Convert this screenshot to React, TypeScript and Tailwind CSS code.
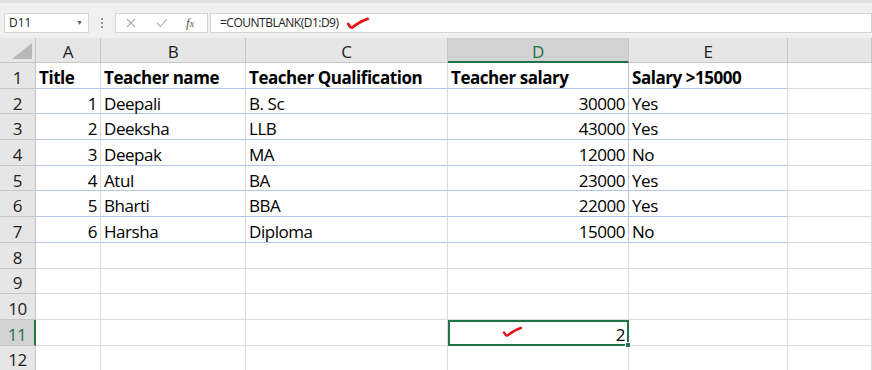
const cols = ['A', 'B', 'C', 'D', 'E', ''];

type Cell = { v: string; right?: boolean; bold?: boolean };

const data: Cell[][] = [
  [{ v: 'Title', bold: true }, { v: 'Teacher name', bold: true }, { v: 'Teacher Qualification', bold: true }, { v: 'Teacher salary', bold: true }, { v: 'Salary >15000', bold: true }],
  [{ v: '1', right: true }, { v: 'Deepali' }, { v: 'B. Sc' }, { v: '30000', right: true }, { v: 'Yes' }],
  [{ v: '2', right: true }, { v: 'Deeksha' }, { v: 'LLB' }, { v: '43000', right: true }, { v: 'Yes' }],
  [{ v: '3', right: true }, { v: 'Deepak' }, { v: 'MA' }, { v: '12000', right: true }, { v: 'No' }],
  [{ v: '4', right: true }, { v: 'Atul' }, { v: 'BA' }, { v: '23000', right: true }, { v: 'Yes' }],
  [{ v: '5', right: true }, { v: 'Bharti' }, { v: 'BBA' }, { v: '22000', right: true }, { v: 'Yes' }],
  [{ v: '6', right: true }, { v: 'Harsha' }, { v: 'Diploma' }, { v: '15000', right: true }, { v: 'No' }],
];

function RedCheck({ className }: { className?: string }) {
  return (
    <svg viewBox="0 0 26 14" className={className} fill="none">
      <path d="M2.5 7.5 C3.5 9 4.5 12 6.5 11.5 C10 9 16 4 23.5 2" stroke="#e8141c" strokeWidth="3" strokeLinecap="round" strokeLinejoin="round" />
    </svg>
  );
}

export default function App() {
  const rows = Array.from({ length: 12 }, (_, i) => i + 1);
  return (
    <div className="h-[370px] w-[872px] overflow-hidden bg-white text-black" style={{ fontFamily: '"Open Sans", sans-serif' }}>
      {/* formula bar */}
      <div className="flex h-[38px] items-start bg-[#f0f0f0] pt-[10px] border-t-[3px] border-[#e2e2e2]">
        <div className="ml-[4px] flex h-[20px] w-[85px] items-center justify-between border border-[#d6d6d6] bg-white pl-[4px] pr-[5px] text-[12px] text-[#222]">
          <span>D11</span>
          <span className="text-[7px] text-[#666]">▼</span>
        </div>
        <div className="flex h-[20px] w-[26px] flex-col items-center justify-center gap-[2px]">
          <span className="h-[2px] w-[2px] bg-[#999]" />
          <span className="h-[2px] w-[2px] bg-[#999]" />
          <span className="h-[2px] w-[2px] bg-[#999]" />
        </div>
        <div className="flex h-[20px] w-[93px] items-center border border-[#d6d6d6] bg-white text-[#b5b5b5]">
          <svg viewBox="0 0 10 10" className="ml-[10px] h-[10px] w-[10px]" stroke="#b0b0b0" strokeWidth="1.1">
            <path d="M1 1 L9 9 M9 1 L1 9" />
          </svg>
          <svg viewBox="0 0 12 10" className="ml-[20px] h-[10px] w-[12px]" stroke="#b0b0b0" strokeWidth="1.1" fill="none">
            <path d="M1 5 L4.5 8.5 L11 1" />
          </svg>
          <span className="ml-[18px] text-[13px] italic text-[#555]" style={{ fontFamily: '"Liberation Serif", serif' }}>
            f<span className="text-[10px]">x</span>
          </span>
        </div>
        <div className="ml-[2px] flex h-[20px] flex-1 items-center border border-[#d6d6d6] bg-white pl-[9px] text-[12px] tracking-[-0.5px] text-[#222]">
          <span>=COUNTBLANK(D1:D9)</span>
          <RedCheck className="ml-[6px] h-[13px] w-[26px]" />
        </div>
      </div>

      {/* sheet */}
      <div className="grid grid-cols-[36px_65px_145px_202px_181px_159px_1fr] grid-rows-[25px_repeat(12,25.7px)] text-[17px] leading-none tracking-[-0.45px]">
        {/* header row */}
        <div className="relative border-b border-r border-[#c6c6c6] bg-[#e6e6e6]">
          <svg viewBox="0 0 20 16" className="absolute bottom-[3px] right-[3px] h-[16px] w-[20px]">
            <path d="M20 0 L20 16 L0 16 Z" fill="#b8b8b8" />
          </svg>
        </div>
        {cols.map((c, i) =>
          c === 'D' ? (
            <div key={i} className="flex items-center justify-center border-b-2 border-r border-b-[#217346] border-r-[#c6c6c6] bg-[#d2d2d2] pt-[3px] text-[#217346]">
              {c}
            </div>
          ) : (
            <div key={i} className="flex items-center justify-center border-b border-r border-[#c6c6c6] bg-[#e6e6e6] pt-[3px] text-[#222]">
              {c}
            </div>
          )
        )}

        {rows.map((r) => {
          const row = data[r - 1];
          const sel = r === 11;
          return [
            <div
              key={`h${r}`}
              className={
                sel
                  ? 'flex items-center justify-center border-b border-r-2 border-b-[#c6c6c6] border-r-[#217346] bg-[#d2d2d2] pt-[4px] text-[#217346]'
                  : 'flex items-center justify-center border-b border-r border-[#c6c6c6] bg-[#e6e6e6] pt-[4px] text-[#222]'
              }
            >
              {r}
            </div>,
            ...cols.map((c, ci) => {
              const cell = row && ci < 5 ? row[ci] : undefined;
              const blueB = row && ci < 5;
              const blueR = row && ci === 3;
              if (sel && c === 'D') {
                return (
                  <div key={`${r}${ci}`} className="relative flex items-center justify-end border-2 border-[#217346] pr-[2px] pt-[3px]">
                    <RedCheck className="absolute left-[52px] top-[3px] h-[14px] w-[21px]" />
                    2
                    <span className="absolute -bottom-[4px] -right-[4px] h-[6px] w-[6px] border border-white bg-[#217346]" />
                  </div>
                );
              }
              return (
                <div
                  key={`${r}${ci}`}
                  className={[
                    'flex items-center overflow-visible whitespace-nowrap border-b border-r pt-[4px]',
                    blueB ? 'border-b-[#b4c6e7]' : 'border-b-[#dadada]',
                    blueR ? 'border-r-[#b4c6e7]' : 'border-r-[#dadada]',
                    cell?.right ? 'justify-end pr-[3px]' : 'pl-[3px]',
                    cell?.bold ? 'font-bold' : '',
                  ].join(' ')}
                >
                  {cell?.v}
                </div>
              );
            }),
          ];
        })}
      </div>
    </div>
  );
}
